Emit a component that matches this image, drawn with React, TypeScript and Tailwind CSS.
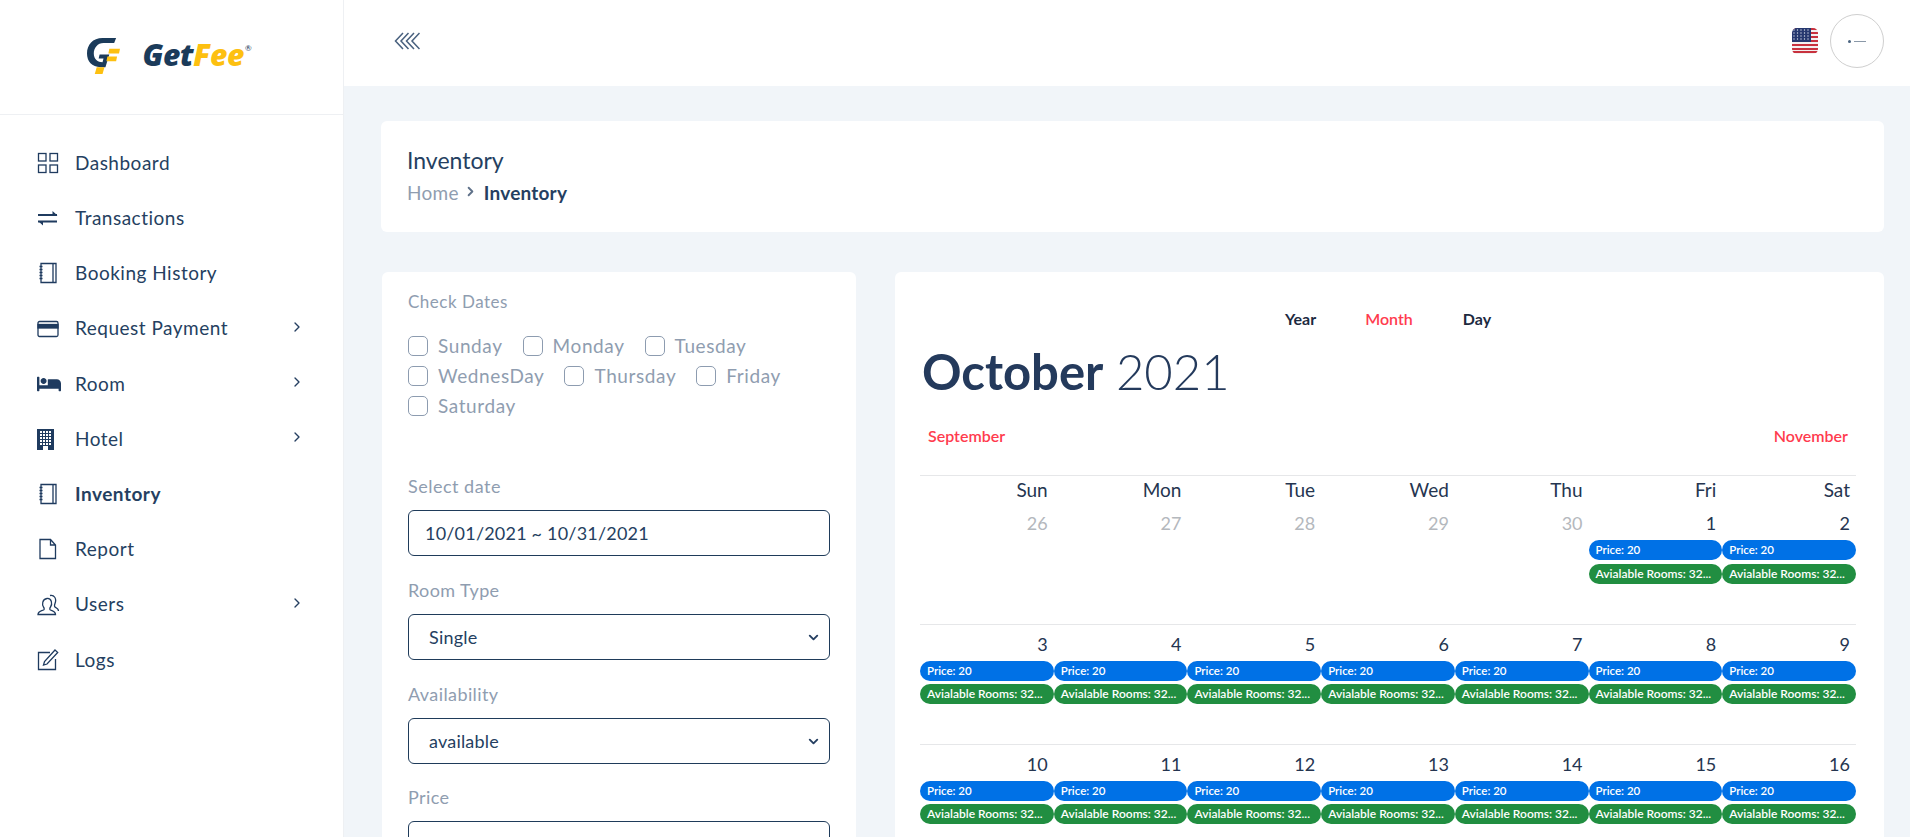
import { ChevronRight, ChevronDown } from "lucide-react";
import { FaBed } from "react-icons/fa";
import type { ReactNode } from "react";

function Svg({ children }: { children: ReactNode }) {
  return (
    <svg width="22" height="22" viewBox="0 0 22 22" fill="none" stroke="#1f3b5f" strokeWidth="1.3">
      {children}
    </svg>
  );
}

const DashIcon = () => (
  <Svg>
    <rect x="1.5" y="1.5" width="7.5" height="7.5" />
    <rect x="13" y="1.5" width="7.5" height="7.5" />
    <rect x="1.5" y="13" width="7.5" height="7.5" />
    <rect x="13" y="13" width="7.5" height="7.5" />
  </Svg>
);
const SwapIcon = () => (
  <Svg>
    <path d="M1 8h19M1 14.500h19" strokeWidth="2.200" />
    <path d="M15.500 4v4.500h5z M1 14h5v4.500z" fill="#1f3b5f" stroke="none" />
  </Svg>
);
const BookIcon = () => (
  <Svg>
    <path d="M4 1.500h15v19H4zM16 1.500v19" />
    <path d="M2.500 4.500h3M2.500 7.500h3M2.500 10.500h3M2.500 13.500h3M2.500 16.500h3" />
  </Svg>
);
const CardIcon = () => (
  <Svg>
    <rect x="1" y="3.500" width="20" height="15" rx="1.500" />
    <rect x="1" y="6.500" width="20" height="3.500" fill="#1f3b5f" />
  </Svg>
);
const HotelIcon = () => (
  <svg width="17" height="21" viewBox="0 0 17 21">
    <rect width="17" height="21" fill="#1f3b5f" />
    {[2, 5, 8, 11, 14].map((y) =>
      [3, 6, 9, 12].map((x) => <rect key={`${x}-${y}`} x={x} y={y} width="2" height="2" fill="#fff" />)
    )}
    <rect x="6" y="17" width="5" height="4" fill="#fff" />
  </svg>
);
const FileIcon = () => (
  <Svg>
    <path d="M3 1.500h10.500l5 5.500v13.500H3zM13.500 1.500V7h5" />
  </Svg>
);
const UsersIcon = () => (
  <Svg>
    <path d="M1 20.500c0-3 3-3.500 5.500-4.500 1-.5.800-2 0-3-1.500-2-1.500-8 3.500-8.500 5-.5 5.500 6 3.500 8.500-.800 1-1 2.500 0 3 2.500 1 5 1.500 5 4.500z" />
    <path d="M13 1.500c4-1 7 3 5 8-.500 1.500-1 2.500 0 3.500 1 1 3.500 1.500 3.500 4" />
  </Svg>
);
const PenIcon = () => (
  <Svg>
    <path d="M13 3.500H1.500v17h17V10" />
    <path d="M18 1l2.700 2.500L10 15l-3.500 1 1-3.500z" />
  </Svg>
);

const nav: { label: string; icon: ReactNode; arrow?: boolean; active?: boolean }[] = [
  { label: "Dashboard", icon: <DashIcon /> },
  { label: "Transactions", icon: <SwapIcon /> },
  { label: "Booking History", icon: <BookIcon /> },
  { label: "Request Payment", icon: <CardIcon />, arrow: true },
  { label: "Room", icon: <FaBed size={24} color="#1f3b5f" />, arrow: true },
  { label: "Hotel", icon: <HotelIcon />, arrow: true },
  { label: "Inventory", icon: <BookIcon />, active: true },
  { label: "Report", icon: <FileIcon /> },
  { label: "Users", icon: <UsersIcon />, arrow: true },
  { label: "Logs", icon: <PenIcon /> },
];

function Logo() {
  return (
    <div className="flex items-center">
      <svg width="33" height="37" viewBox="0 0 34 38">
        <path d="M30 1H16C6 1 0 8 0 17c0 8 5 14 14 14h5l4-13H13l-1 4h5l-1 4c-5 0-9-3-9-9 0-6 4-11 10-11h11z" fill="#1b3b5a" />
        <path d="M23 12h11l-1 5H22zM21 20h10l-1 5H20zM10 31h8l-2 7H8z" fill="#fdc010" />
      </svg>
      <span className="ml-[22px] text-[30px] font-extrabold italic leading-none tracking-[-0.4px] font-['Open_Sans',sans-serif] text-[#1b3b5a]">
        Get<span className="text-[#fdc010]">Fee</span>
      </span>
      <span className="mb-[14px] ml-[1px] text-[8px] leading-none text-[#1b3b5a]">®</span>
    </div>
  );
}

function Flag() {
  return (
    <svg width="26" height="26" viewBox="0 0 26 26">
      <defs>
        <clipPath id="flag-clip">
          <rect width="26" height="26" rx="5" />
        </clipPath>
      </defs>
      <g clipPath="url(#flag-clip)">
        <rect width="26" height="26" fill="#f3f0f0" />
        {[0, 4, 8, 12, 16, 20, 23].map((y) => (
          <rect key={y} y={y} width="26" height="2" fill="#c8313e" />
        ))}
        <rect width="19" height="14" fill="#26386f" />
        {[2, 5, 8, 11].map((y) =>
          [2, 5.5, 9, 12.5, 16].map((x) => <circle key={`${x}-${y}`} cx={x} cy={y} r="0.7" fill="#d5dbe8" />)
        )}
      </g>
    </svg>
  );
}

function Sidebar() {
  return (
    <aside className="flex w-[344px] shrink-0 flex-col border-r border-[#eef0f3] bg-white">
      <div className="flex h-[115px] items-center justify-center border-b border-[#eef0f3] pb-[4px] pr-[4px]">
        <Logo />
      </div>
      <nav className="pl-[37px] pr-[38px] pt-[20.500px]">
        {nav.map((item) => (
          <div key={item.label} className="flex h-[55.200px] items-center">
            <span className="flex w-[38px] shrink-0 items-center">{item.icon}</span>
            <span className={`text-[19px] tracking-[0.5px] text-[#253f61] ${item.active ? "font-bold" : ""}`}>{item.label}</span>
            {item.arrow && <ChevronRight size={16} className="ml-auto -mt-[4px] text-[#253f61]" />}
          </div>
        ))}
      </nav>
    </aside>
  );
}

function Header() {
  return (
    <header className="flex h-[86px] shrink-0 items-center bg-white pb-[4px] pl-[50px] pr-[26px]">
      <svg width="26" height="18" viewBox="0 0 26 18" fill="none" stroke="#48607e" strokeWidth="1.500">
        <path d="M9 1 1.500 9 9 17M14.500 1 7 9l7.500 8M20 1l-7.500 8 7.500 8M25.500 1 18 9l7.500 8" />
      </svg>
      <div className="ml-auto flex items-center gap-[12px]">
        <Flag />
        <div className="flex h-[54px] w-[54px] items-center justify-center rounded-full border border-[#cfcfcf]">
          <span className="h-[3px] w-[3px] rounded-full bg-[#4a6480]" />
          <span className="ml-[3px] h-[1px] w-[12px] bg-[#8a98a8]" />
        </div>
      </div>
    </header>
  );
}

function Day({ label }: { label: string }) {
  return (
    <label className="flex items-center">
      <span className="mr-[10px] h-[20px] w-[20px] rounded-[5px] border border-[#8d9cb0]" />
      <span className="text-[19px] leading-[30px] tracking-[0.6px] text-[#8f9db0]">{label}</span>
    </label>
  );
}

function FieldBox({ children }: { children: ReactNode }) {
  return (
    <div className="flex h-[46px] items-center rounded-[6px] border border-[#1f3b5a] pl-[16px] pr-[8px] text-[18px] tracking-[0.2px] text-[#253f61]">
      {children}
    </div>
  );
}

function SelectField({ label, value }: { label: string; value: string }) {
  return (
    <div>
      <p className="text-[18px] leading-[24px] tracking-[0.4px] text-[#8f9db0]">{label}</p>
      <div className="mt-[12px]">
        <FieldBox>
          <span className="pl-[4px]">{value}</span>
          <ChevronDown size={15} strokeWidth={3} className="ml-auto text-[#253f61]" />
        </FieldBox>
      </div>
    </div>
  );
}

function FilterCard() {
  return (
    <section className="ml-[1px] h-[600px] w-[474px] shrink-0 rounded-[6px] bg-white px-[26px] pt-[18px]">
      <p className="text-[17px] leading-[24px] tracking-[0.5px] text-[#8f9db0]">Check Dates</p>
      <div className="mt-[17px] flex flex-col">
        <div className="flex gap-[20px]">
          <Day label="Sunday" />
          <Day label="Monday" />
          <Day label="Tuesday" />
        </div>
        <div className="flex gap-[20px]">
          <Day label="WednesDay" />
          <Day label="Thursday" />
          <Day label="Friday" />
        </div>
        <div className="flex gap-[20px]">
          <Day label="Saturday" />
        </div>
      </div>
      <p className="mt-[53px] text-[18px] leading-[24px] tracking-[0.5px] text-[#8f9db0]">Select date</p>
      <div className="mt-[12px]">
        <FieldBox>10/01/2021 ~ 10/31/2021</FieldBox>
      </div>
      <div className="mt-[22px] flex flex-col gap-[22px]">
        <SelectField label="Room Type" value="Single" />
        <SelectField label="Availability" value="available" />
      </div>
      <p className="mt-[21px] text-[18px] leading-[24px] tracking-[0.4px] text-[#8f9db0]">Price</p>
      <div className="mt-[12px]">
        <FieldBox>{""}</FieldBox>
      </div>
    </section>
  );
}

const weekdays = ["Sun", "Mon", "Tue", "Wed", "Thu", "Fri", "Sat"];

function Cell({ n, muted, pills = true, first }: { n: number; muted?: boolean; pills?: boolean; first?: boolean }) {
  return (
    <div className="min-w-0">
      <p className={`pr-[6px] text-right text-[18px] leading-[24px] ${muted ? "text-[#b4b8bd]" : "text-[#253550]"}`}>{n}</p>
      {pills && (
        <div className={`mt-[5px] flex flex-col ${first ? "gap-[4px]" : "gap-[3px]"}`}>
          <div className="h-[20px] whitespace-nowrap rounded-[10px] bg-[#0071e6] pl-[7px] text-[11.500px] font-semibold leading-[20px] text-white">Price: 20</div>
          <div className="h-[20px] whitespace-nowrap rounded-[10px] bg-[#218e41] pl-[7px] text-[12px] font-semibold leading-[20px] text-white">Avialable Rooms: 32...</div>
        </div>
      )}
    </div>
  );
}

function Calendar() {
  const weeks = [
    [3, 4, 5, 6, 7, 8, 9],
    [10, 11, 12, 13, 14, 15, 16],
  ];
  return (
    <section className="min-w-0 flex-1 rounded-[6px] bg-white pl-[25px] pr-[28px] pt-[35px]">
      <div className="flex h-[24px] items-center text-[16px] font-bold text-[#1d2a3f]">
        <span className="ml-[365px]">Year</span>
        <span className="ml-[49px] font-semibold text-[#ff3b4e]">Month</span>
        <span className="ml-[50px]">Day</span>
      </div>
      <h2 className="ml-[2px] mt-[10px] text-[49px] leading-[60px] text-[#243a5c]">
        <span className="font-bold">October</span> <span className="font-light">2021</span>
      </h2>
      <div className="mt-[23px] flex justify-between pl-[8px] pr-[8px] text-[16px] font-semibold leading-[24px] text-[#ff3b4e]">
        <span>September</span>
        <span>November</span>
      </div>
      <div className="mt-[27px] border-t border-[#e6e7e9]">
        <div className="grid grid-cols-7">
          {weekdays.map((d) => (
            <p key={d} className="pr-[6px] text-right text-[19px] leading-[27px] text-[#253550]">{d}</p>
          ))}
        </div>
        <div className="grid h-[121px] grid-cols-7 content-start pt-[8px]">
          {[26, 27, 28, 29, 30].map((n) => (
            <Cell key={n} n={n} muted pills={false} />
          ))}
          <Cell n={1} first />
          <Cell n={2} first />
        </div>
        {weeks.map((w) => (
          <div key={w[0]} className="grid h-[120px] grid-cols-7 content-start border-t border-[#e6e7e9] pt-[7px]">
            {w.map((n) => (
              <Cell key={n} n={n} />
            ))}
          </div>
        ))}
      </div>
    </section>
  );
}

export default function App() {
  return (
    <div className="flex h-[837px] w-full overflow-hidden bg-[#f1f5f9] font-['Lato',sans-serif]">
      <Sidebar />
      <div className="flex min-w-0 flex-1 flex-col">
        <Header />
        <main className="flex flex-col pl-[37px] pr-[26px] pt-[35px]">
          <div className="h-[111px] rounded-[6px] bg-white pl-[26px] pt-[25px]">
            <p className="text-[23px] leading-[28px] text-[#253f61]">Inventory</p>
            <div className="mt-[7px] flex items-center text-[19px] leading-[24px]">
              <span className="tracking-[0.3px] text-[#8f9db0]">Home</span>
              <ChevronRight size={15} strokeWidth={3} className="mx-[4px] -mt-[3px] text-[#60728a]" />
              <span className="ml-[2px] font-bold tracking-[0.2px] text-[#253f61]">Inventory</span>
            </div>
          </div>
          <div className="mt-[40px] flex gap-[39px]">
            <FilterCard />
            <Calendar />
          </div>
        </main>
      </div>
    </div>
  );
}
